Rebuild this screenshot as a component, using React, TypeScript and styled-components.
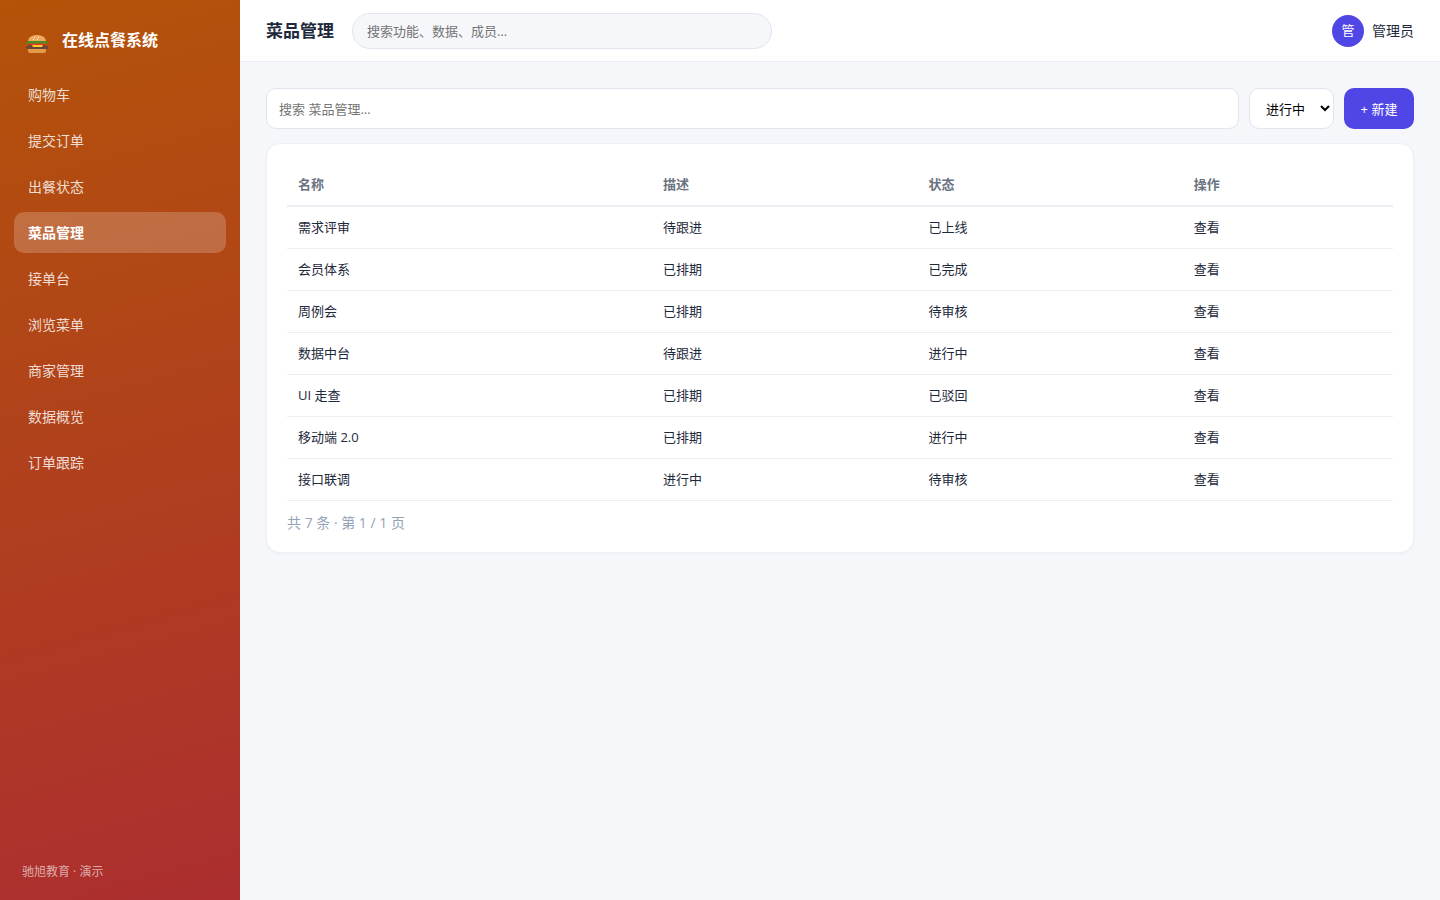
import React from "react";
import styled, { createGlobalStyle } from "styled-components";

const GlobalStyle = createGlobalStyle`
  *, *::before, *::after { box-sizing: border-box; }
  body {
    margin: 0;
    background: #f5f7fb;
    color: #1e293b;
    font-family: "Open Sans", "Noto Sans CJK SC", sans-serif;
    font-size: 14px;
    line-height: 21px;
  }
  button, input, select { font-family: inherit; font-size: 13px; }
`;

const Shell = styled.div`
  display: flex;
  min-height: 100vh;
`;

const Sidebar = styled.aside`
  display: flex;
  flex-direction: column;
  flex: 0 0 240px;
  padding: 22px 14px 18px;
  background: linear-gradient(165deg, #b45309 0%, #ac2e30 100%);
  color: #fff;
`;

const Brand = styled.div`
  display: flex;
  align-items: center;
  gap: 14px;
  height: 36px;
  margin-bottom: 16px;
  padding-left: 12px;
  font-size: 16px;
  font-weight: 700;

  svg { flex: none; margin-top: 6px; }
`;

const Nav = styled.nav`
  display: flex;
  flex-direction: column;
  gap: 5px;
`;

const NavLink = styled.a<{ $active: boolean }>`
  padding: 10px 14px;
  border-radius: 10px;
  background: ${(p) => (p.$active ? "rgba(255, 255, 255, 0.2)" : "transparent")};
  color: ${(p) => (p.$active ? "#fff" : "rgba(255, 255, 255, 0.82)")};
  font-weight: ${(p) => (p.$active ? 700 : 400)};
  text-decoration: none;
`;

const SidebarFoot = styled.div`
  margin-top: auto;
  padding-left: 8px;
  color: rgba(255, 255, 255, 0.6);
  font-size: 12px;
`;

const Main = styled.div`
  flex: 1;
  min-width: 0;
`;

const Header = styled.header`
  display: flex;
  align-items: center;
  gap: 18px;
  height: 62px;
  padding: 0 26px;
  border-bottom: 1px solid #eceef3;
  background: #fff;
`;

const Title = styled.h1`
  margin: 0;
  font-size: 17px;
  font-weight: 700;
  white-space: nowrap;
`;

const GlobalSearch = styled.input`
  flex: 0 1 420px;
  min-width: 0;
  height: 36px;
  padding: 0 14px;
  border: 1px solid #e2e5ee;
  border-radius: 18px;
  background: #f5f7fb;
  &::placeholder { color: #757575; }
`;

const User = styled.div`
  display: flex;
  align-items: center;
  gap: 8px;
  margin-left: auto;
  white-space: nowrap;
`;

const Avatar = styled.span`
  display: grid;
  place-items: center;
  width: 32px;
  height: 32px;
  border-radius: 50%;
  background: #4f46e5;
  color: #fff;
  font-size: 13px;
`;

const Content = styled.main`
  padding: 26px;
`;

const Toolbar = styled.div`
  display: flex;
  gap: 10px;
  height: 41px;
  margin-bottom: 14px;
`;

const TableSearch = styled.input`
  flex: 1;
  min-width: 0;
  padding: 0 12px;
  border: 1px solid #e2e5ee;
  border-radius: 10px;
  background: #fff;
  &::placeholder { color: #757575; }
`;

const StatusSelect = styled.select`
  width: 85px;
  padding: 0 0 0 12px;
  border: 1px solid #e2e5ee;
  border-radius: 10px;
  background: #fff;
  color: #000;
`;

const CreateButton = styled.button`
  width: 70px;
  padding: 0;
  border: 0;
  border-radius: 10px;
  background: #4f46e5;
  color: #fff;
`;

const Card = styled.section`
  padding: 20px;
  border: 1px solid #eef0f5;
  border-radius: 14px;
  background: #fff;
  box-shadow: 0 1px 3px rgba(30, 41, 59, 0.04);
`;

const Table = styled.table`
  width: 100%;
  table-layout: fixed;
  border-collapse: separate;
  border-spacing: 0;
  font-size: 13px;
`;

const HeadCell = styled.th<{ $width: number }>`
  width: ${(p) => p.$width}%;
  padding: 10px 11px;
  border-bottom: 2px solid #eceef3;
  color: #6b7280;
  font-weight: 600;
  text-align: left;
`;

const Cell = styled.td`
  padding: 10px 11px;
  border-bottom: 1px solid #eceef3;
`;

const Pager = styled.div`
  margin-top: 12px;
  color: #94a3b8;
  font-size: 14px;
  line-height: 19px;
`;

const Burger = () => (
  <svg width="22" height="20" viewBox="0 0 22 20" aria-hidden="true">
    <path d="M2 9C2 4 6 2 11 2s9 2 9 7z" fill="#f0a860" />
    <path d="M2 15h18v3q0 2-3 2H5q-3 0-3-2z" fill="#e59a4a" />
    <path d="M1 13h21v3H1l-1-1.500z" fill="#6d4638" />
    <path d="M3 10h16v3H3z" fill="#7a3b1c" />
    <path d="M3 10h16v2H4z" fill="#f0322e" />
    <path d="M6 12h11l-1 2H7z" fill="#ffca28" />
    <path d="M2 8h18l2 2-2 1-3-1-2 1-3-1-3 1-3-1-3 1H0z" fill="#479122" />
    <path d="M8 4h1v1H8zM12 4h1v1h-1zM7 6h1v1H7zM11 6h1v1h-1z" fill="#fff3d6" />
  </svg>
);

const navItems = ["购物车", "提交订单", "出餐状态", "菜品管理", "接单台", "浏览菜单", "商家管理", "数据概览", "订单跟踪"];
const columns = [
  { label: "名称", width: 33 },
  { label: "描述", width: 24 },
  { label: "状态", width: 24 },
  { label: "操作", width: 19 },
];
const rows = [
  ["需求评审", "待跟进", "已上线"],
  ["会员体系", "已排期", "已完成"],
  ["周例会", "已排期", "待审核"],
  ["数据中台", "待跟进", "进行中"],
  ["UI 走查", "已排期", "已驳回"],
  ["移动端 2.0", "已排期", "进行中"],
  ["接口联调", "进行中", "待审核"],
];

export default function App() {
  return (
    <>
      <GlobalStyle />
      <Shell>
        <Sidebar>
          <Brand>
            <Burger />
            <span>在线点餐系统</span>
          </Brand>
          <Nav>
            {navItems.map((item) => (
              <NavLink key={item} href="#" $active={item === "菜品管理"}>
                {item}
              </NavLink>
            ))}
          </Nav>
          <SidebarFoot>驰旭教育 · 演示</SidebarFoot>
        </Sidebar>
        <Main>
          <Header>
            <Title>菜品管理</Title>
            <GlobalSearch type="search" aria-label="搜索" placeholder="搜索功能、数据、成员…" />
            <User>
              <Avatar>管</Avatar>
              <span>管理员</span>
            </User>
          </Header>
          <Content>
            <Toolbar>
              <TableSearch type="search" aria-label="搜索菜品" placeholder="搜索 菜品管理..." />
              <StatusSelect aria-label="状态" defaultValue="进行中">
                <option>进行中</option>
                <option>已完成</option>
                <option>待审核</option>
              </StatusSelect>
              <CreateButton type="button">+ 新建</CreateButton>
            </Toolbar>
            <Card>
              <Table>
                <thead>
                  <tr>
                    {columns.map((c) => (
                      <HeadCell key={c.label} scope="col" $width={c.width}>{c.label}</HeadCell>
                    ))}
                  </tr>
                </thead>
                <tbody>
                  {rows.map((row) => (
                    <tr key={row[0]}>
                      {row.map((value, i) => (
                        <Cell key={i}>{value}</Cell>
                      ))}
                      <Cell>查看</Cell>
                    </tr>
                  ))}
                </tbody>
              </Table>
              <Pager>共 7 条 · 第 1 / 1 页</Pager>
            </Card>
          </Content>
        </Main>
      </Shell>
    </>
  );
}
